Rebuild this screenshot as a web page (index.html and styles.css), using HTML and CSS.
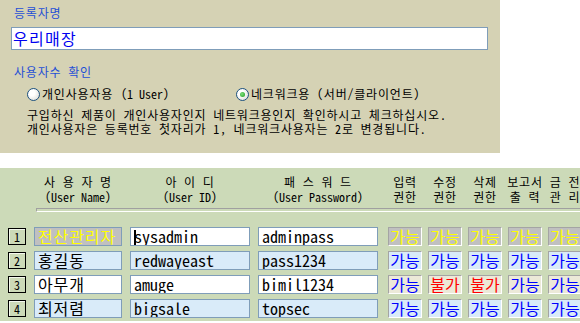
FILE: index.html
```html
<!DOCTYPE html>
<html lang="ko">
<head>
<meta charset="utf-8">
<title>등록</title>
<link rel="stylesheet" href="styles.css">
</head>
<body>
<section class="reg">
  <div class="label ko">등록자명</div>
  <div class="field">우리매장</div>
  <div class="label ko label2">사용자수 확인</div>
  <div class="radios">
    <span class="opt opt1"><span class="radio"></span><span class="ko">개인사용자용</span> (1 User)</span>
    <span class="opt"><span class="radio checked"></span><span class="ko">네크워크용 (서버/클라이언트)</span></span>
  </div>
  <p class="desc ko">구입하신 제품이 개인사용자인지 네트워크용인지 확인하시고 체크하십시오.<br>개인사용자은 등록번호 첫자리가 1, 네크워크사용자는 2로 변경됩니다.</p>
</section>

<section class="users">
  <div class="hdr">
    <div class="c-num"></div>
    <div class="c-name h"><span class="ko">사 용 자 명</span><br>(User Name)</div>
    <div class="c-id h"><span class="ko">아 이 디</span><br>(User ID)</div>
    <div class="c-pw h"><span class="ko">패 스 워 드</span><br>(User Password)</div>
    <div class="perms">
      <div class="ph ko"><span>입력<br>권한</span></div>
      <div class="ph ko"><span>수정<br>권한</span></div>
      <div class="ph ko"><span>삭제<br>권한</span></div>
      <div class="ph ko"><span>보고서<br>출 력</span></div>
      <div class="ph ko"><span>금 전<br>관 리</span></div>
    </div>
  </div>
  <div class="rule"></div>
  <div class="rows">
    <div class="row r1">
      <div class="c-num num">1</div>
      <div class="c-name box name">전산관리자</div>
      <div class="c-id box"><span class="caret"></span>sysadmin</div>
      <div class="c-pw box">adminpass</div>
      <div class="perms">
        <div class="pm">가능</div><div class="pm">가능</div><div class="pm">가능</div><div class="pm">가능</div><div class="pm">가능</div>
      </div>
    </div>
    <div class="row r2">
      <div class="c-num num">2</div>
      <div class="c-name box name">홍길동</div>
      <div class="c-id box">redwayeast</div>
      <div class="c-pw box">pass1234</div>
      <div class="perms">
        <div class="pm">가능</div><div class="pm">가능</div><div class="pm">가능</div><div class="pm">가능</div><div class="pm">가능</div>
      </div>
    </div>
    <div class="row r3">
      <div class="c-num num">3</div>
      <div class="c-name box name">아무개</div>
      <div class="c-id box">amuge</div>
      <div class="c-pw box">bimil1234</div>
      <div class="perms">
        <div class="pm">가능</div><div class="pm no">불가</div><div class="pm no">불가</div><div class="pm">가능</div><div class="pm">가능</div>
      </div>
    </div>
    <div class="row r4">
      <div class="c-num num">4</div>
      <div class="c-name box name">최저렴</div>
      <div class="c-id box">bigsale</div>
      <div class="c-pw box">topsec</div>
      <div class="perms">
        <div class="pm">가능</div><div class="pm">가능</div><div class="pm">가능</div><div class="pm">가능</div><div class="pm">가능</div>
      </div>
    </div>
  </div>
</section>
</body>
</html>
```

FILE: styles.css
```css
* { box-sizing: border-box; }

body {
  margin: 0;
  background: #fff;
  font-family: "Noto Sans Mono CJK KR", "Noto Sans CJK KR", sans-serif;
  font-size: 12px;
  color: #000;
  overflow: hidden;
}

/* Hangul runs are widened to the 12px full-width advance of the original */
.ko { letter-spacing: 0.8px; }

/* ---------- registration panel ---------- */
.reg {
  width: 500px;
  height: 153px;
  background: #d5d2b4;
  padding: 6px 0 0 11px;
}

.label {
  color: #1f4fd6;
  line-height: 14px;
  margin-left: 3px;
}

.field {
  margin-top: 7px;
  width: 477px;
  height: 23px;
  border: 1px solid #7f9db9;
  background: #fff;
  color: #0000f0;
  font-size: 16px;
  line-height: 21px;
  padding-left: 1px;
  letter-spacing: 1.3px;
}

.label2 { margin-top: 15px; }

.radios {
  display: flex;
  margin: 8px 0 0 16px;
  line-height: 14px;
}

.opt {
  display: flex;
  align-items: center;
  gap: 2px;
  white-space: pre;
}

.opt1 { width: 209px; }

.radio {
  position: relative;
  width: 13px;
  height: 13px;
  flex: none;
  border-radius: 50%;
  border: 1px solid #1c5180;
  background: radial-gradient(circle at 35% 35%, #ffffff 30%, #d6d6cf 100%);
}

.radio.checked::after {
  content: "";
  position: absolute;
  left: 3px;
  top: 3px;
  width: 5px;
  height: 5px;
  border-radius: 50%;
  background: radial-gradient(circle at 40% 40%, #7ee07e, #1a9a1a);
}

.desc {
  margin: 7px 0 0 16px;
  line-height: 14px;
}

/* ---------- users panel ---------- */
.users {
  margin-top: 15px;
  width: 580px;
  height: 153px;
  background: #ccdab8;
  padding: 6px 0 0 8px;
  overflow: hidden;
}

.hdr, .row {
  display: flex;
  width: max-content;
}

.c-num { width: 18px; flex: none; }
.c-name { width: 88px; margin-left: 8px; flex: none; }
.c-id { width: 120px; margin-left: 8px; flex: none; }
.c-pw { width: 120px; margin-left: 8px; flex: none; }

.perms {
  display: flex;
  gap: 6px;
  margin-left: 10px;
}

.h {
  line-height: 15px;
  text-align: center;
  white-space: nowrap;
}

.ph {
  width: 34px;
  display: flex;
  justify-content: center;
  line-height: 15px;
  white-space: nowrap;
  text-align: center;
}

.rule {
  margin: 4px 0 0 28px;
  width: 600px;
  height: 4px;
  border-top: 1px solid #a0a0a0;
  border-left: 1px solid #a0a0a0;
  border-bottom: 1px solid #ffffff;
}

.rows {
  margin-top: 15px;
  display: flex;
  flex-direction: column;
  gap: 5px;
}

.row {
  align-items: center;
  height: 19px;
}

.num {
  height: 17px;
  border: 1px solid #000;
  box-shadow: inset 1px 1px #f4f8ee;
  text-align: center;
  line-height: 15px;
}

.box {
  height: 19px;
  border: 1px solid #7f9db9;
  background: #fff;
  font-size: 16px;
  line-height: 17px;
  padding-left: 3px;
  white-space: nowrap;
  overflow: hidden;
}

.name { letter-spacing: 0.9px; }

.caret {
  display: inline-block;
  width: 2px;
  height: 15px;
  background: #000;
  vertical-align: -2px;
  margin-right: -2px;
}

.pm {
  width: 34px;
  height: 19px;
  border: 1px solid;
  border-color: #a4a4a4 #ffffff #ffffff #a4a4a4;
  font-size: 16px;
  line-height: 17px;
  text-align: center;
  color: #0000ff;
  white-space: nowrap;
}

.pm.no { color: #ff0000; }

/* row variants */
.r1 .name { background: #c0c0c0; color: #ffff00; }
.r1 .pm { background: #c0c0c0; color: #ffff00; }

.r2 .box, .r4 .box { background: #d9ebf9; }
.r2 .pm, .r4 .pm { background: #d9ebf9; }

.r3 .pm { background: #ece9d8; }
```
